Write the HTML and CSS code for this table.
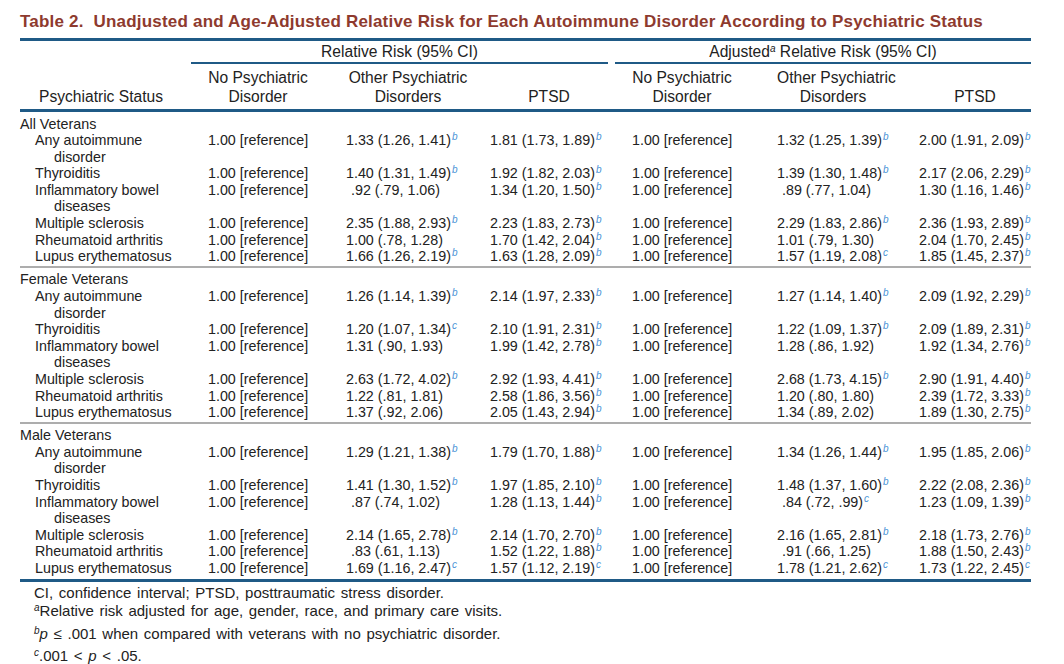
FILE: index.html
```html
<!DOCTYPE html>
<html>
<head>
<meta charset="utf-8">
<link rel="stylesheet" href="styles.css">
</head>
<body>
<div class="page">
  <h1 class="title">Table 2. &nbsp;Unadjusted and Age-Adjusted Relative Risk for Each Autoimmune Disorder According to Psychiatric Status</h1>
  <div class="table">
    <div class="spanrow">
      <div class="sp sp1">Relative Risk (95% CI)</div>
      <div class="sp sp2">Adjusted<span class="n">a</span> Relative Risk (95% CI)</div>
    </div>
    <div class="colrow">
      <div class="h h1">Psychiatric Status</div>
      <div class="h h2">No Psychiatric<br>Disorder</div>
      <div class="h h3">Other Psychiatric<br>Disorders</div>
      <div class="h h4">PTSD</div>
      <div class="h h5">No Psychiatric<br>Disorder</div>
      <div class="h h6">Other Psychiatric<br>Disorders</div>
      <div class="h h7">PTSD</div>
    </div>

    <div class="group">
      <div class="gl">All Veterans</div>
      <div class="r"><div class="lab">Any autoimmune<br>disorder</div><div class="d">1.00 [reference]</div><div class="d">1.33 (1.26, 1.41)<span class="s">b</span></div><div class="d">1.81 (1.73, 1.89)<span class="s">b</span></div><div class="d">1.00 [reference]</div><div class="d">1.32 (1.25, 1.39)<span class="s">b</span></div><div class="d">2.00 (1.91, 2.09)<span class="s">b</span></div></div>
      <div class="r"><div class="lab">Thyroiditis</div><div class="d">1.00 [reference]</div><div class="d">1.40 (1.31, 1.49)<span class="s">b</span></div><div class="d">1.92 (1.82, 2.03)<span class="s">b</span></div><div class="d">1.00 [reference]</div><div class="d">1.39 (1.30, 1.48)<span class="s">b</span></div><div class="d">2.17 (2.06, 2.29)<span class="s">b</span></div></div>
      <div class="r"><div class="lab">Inflammatory bowel<br>diseases</div><div class="d">1.00 [reference]</div><div class="d o">.92 (.79, 1.06)</div><div class="d">1.34 (1.20, 1.50)<span class="s">b</span></div><div class="d">1.00 [reference]</div><div class="d o">.89 (.77, 1.04)</div><div class="d">1.30 (1.16, 1.46)<span class="s">b</span></div></div>
      <div class="r"><div class="lab">Multiple sclerosis</div><div class="d">1.00 [reference]</div><div class="d">2.35 (1.88, 2.93)<span class="s">b</span></div><div class="d">2.23 (1.83, 2.73)<span class="s">b</span></div><div class="d">1.00 [reference]</div><div class="d">2.29 (1.83, 2.86)<span class="s">b</span></div><div class="d">2.36 (1.93, 2.89)<span class="s">b</span></div></div>
      <div class="r"><div class="lab">Rheumatoid arthritis</div><div class="d">1.00 [reference]</div><div class="d">1.00 (.78, 1.28)</div><div class="d">1.70 (1.42, 2.04)<span class="s">b</span></div><div class="d">1.00 [reference]</div><div class="d">1.01 (.79, 1.30)</div><div class="d">2.04 (1.70, 2.45)<span class="s">b</span></div></div>
      <div class="r"><div class="lab">Lupus erythematosus</div><div class="d">1.00 [reference]</div><div class="d">1.66 (1.26, 2.19)<span class="s">b</span></div><div class="d">1.63 (1.28, 2.09)<span class="s">b</span></div><div class="d">1.00 [reference]</div><div class="d">1.57 (1.19, 2.08)<span class="s">c</span></div><div class="d">1.85 (1.45, 2.37)<span class="s">b</span></div></div>
    </div>

    <div class="group">
      <div class="gl">Female Veterans</div>
      <div class="r"><div class="lab">Any autoimmune<br>disorder</div><div class="d">1.00 [reference]</div><div class="d">1.26 (1.14, 1.39)<span class="s">b</span></div><div class="d">2.14 (1.97, 2.33)<span class="s">b</span></div><div class="d">1.00 [reference]</div><div class="d">1.27 (1.14, 1.40)<span class="s">b</span></div><div class="d">2.09 (1.92, 2.29)<span class="s">b</span></div></div>
      <div class="r"><div class="lab">Thyroiditis</div><div class="d">1.00 [reference]</div><div class="d">1.20 (1.07, 1.34)<span class="s">c</span></div><div class="d">2.10 (1.91, 2.31)<span class="s">b</span></div><div class="d">1.00 [reference]</div><div class="d">1.22 (1.09, 1.37)<span class="s">b</span></div><div class="d">2.09 (1.89, 2.31)<span class="s">b</span></div></div>
      <div class="r"><div class="lab">Inflammatory bowel<br>diseases</div><div class="d">1.00 [reference]</div><div class="d">1.31 (.90, 1.93)</div><div class="d">1.99 (1.42, 2.78)<span class="s">b</span></div><div class="d">1.00 [reference]</div><div class="d">1.28 (.86, 1.92)</div><div class="d">1.92 (1.34, 2.76)<span class="s">b</span></div></div>
      <div class="r"><div class="lab">Multiple sclerosis</div><div class="d">1.00 [reference]</div><div class="d">2.63 (1.72, 4.02)<span class="s">b</span></div><div class="d">2.92 (1.93, 4.41)<span class="s">b</span></div><div class="d">1.00 [reference]</div><div class="d">2.68 (1.73, 4.15)<span class="s">b</span></div><div class="d">2.90 (1.91, 4.40)<span class="s">b</span></div></div>
      <div class="r"><div class="lab">Rheumatoid arthritis</div><div class="d">1.00 [reference]</div><div class="d">1.22 (.81, 1.81)</div><div class="d">2.58 (1.86, 3.56)<span class="s">b</span></div><div class="d">1.00 [reference]</div><div class="d">1.20 (.80, 1.80)</div><div class="d">2.39 (1.72, 3.33)<span class="s">b</span></div></div>
      <div class="r"><div class="lab">Lupus erythematosus</div><div class="d">1.00 [reference]</div><div class="d">1.37 (.92, 2.06)</div><div class="d">2.05 (1.43, 2.94)<span class="s">b</span></div><div class="d">1.00 [reference]</div><div class="d">1.34 (.89, 2.02)</div><div class="d">1.89 (1.30, 2.75)<span class="s">b</span></div></div>
    </div>

    <div class="group">
      <div class="gl">Male Veterans</div>
      <div class="r"><div class="lab">Any autoimmune<br>disorder</div><div class="d">1.00 [reference]</div><div class="d">1.29 (1.21, 1.38)<span class="s">b</span></div><div class="d">1.79 (1.70, 1.88)<span class="s">b</span></div><div class="d">1.00 [reference]</div><div class="d">1.34 (1.26, 1.44)<span class="s">b</span></div><div class="d">1.95 (1.85, 2.06)<span class="s">b</span></div></div>
      <div class="r"><div class="lab">Thyroiditis</div><div class="d">1.00 [reference]</div><div class="d">1.41 (1.30, 1.52)<span class="s">b</span></div><div class="d">1.97 (1.85, 2.10)<span class="s">b</span></div><div class="d">1.00 [reference]</div><div class="d">1.48 (1.37, 1.60)<span class="s">b</span></div><div class="d">2.22 (2.08, 2.36)<span class="s">b</span></div></div>
      <div class="r"><div class="lab">Inflammatory bowel<br>diseases</div><div class="d">1.00 [reference]</div><div class="d o">.87 (.74, 1.02)</div><div class="d">1.28 (1.13, 1.44)<span class="s">b</span></div><div class="d">1.00 [reference]</div><div class="d o">.84 (.72, .99)<span class="s">c</span></div><div class="d">1.23 (1.09, 1.39)<span class="s">b</span></div></div>
      <div class="r"><div class="lab">Multiple sclerosis</div><div class="d">1.00 [reference]</div><div class="d">2.14 (1.65, 2.78)<span class="s">b</span></div><div class="d">2.14 (1.70, 2.70)<span class="s">b</span></div><div class="d">1.00 [reference]</div><div class="d">2.16 (1.65, 2.81)<span class="s">b</span></div><div class="d">2.18 (1.73, 2.76)<span class="s">b</span></div></div>
      <div class="r"><div class="lab">Rheumatoid arthritis</div><div class="d">1.00 [reference]</div><div class="d o">.83 (.61, 1.13)</div><div class="d">1.52 (1.22, 1.88)<span class="s">b</span></div><div class="d">1.00 [reference]</div><div class="d o">.91 (.66, 1.25)</div><div class="d">1.88 (1.50, 2.43)<span class="s">b</span></div></div>
      <div class="r"><div class="lab">Lupus erythematosus</div><div class="d">1.00 [reference]</div><div class="d">1.69 (1.16, 2.47)<span class="s">c</span></div><div class="d">1.57 (1.12, 2.19)<span class="s">c</span></div><div class="d">1.00 [reference]</div><div class="d">1.78 (1.21, 2.62)<span class="s">c</span></div><div class="d">1.73 (1.22, 2.45)<span class="s">c</span></div></div>
    </div>
  </div>

  <div class="notes">
    <p class="note n1">CI, confidence interval; PTSD, posttraumatic stress disorder.</p>
    <p class="note n2"><span class="n">a</span>Relative risk adjusted for age, gender, race, and primary care visits.</p>
    <p class="note n3"><span class="n">b</span><i>p</i> ≤ .001 when compared with veterans with no psychiatric disorder.</p>
    <p class="note n4"><span class="n">c</span>.001 &lt; <i>p</i> &lt; .05.</p>
  </div>
</div>
</body>
</html>
```

FILE: styles.css
```css
html, body {
  margin: 0;
  padding: 0;
  background: #ffffff;
}

body {
  color: #222222;
  font-family: "Liberation Sans", Arial, sans-serif;
  font-size: 14.3px;
}

.page {
  padding: 12px 0 0 20px;
  width: 1011px;
}

.title {
  margin: 0;
  font-size: 17px;
  line-height: 20px;
  font-weight: bold;
  letter-spacing: 0.2px;
  color: #8e3a2e;
  white-space: nowrap;
}

.table {
  margin-top: 6px;
  border-top: 3px solid #1f5a86;
}

.spanrow,
.colrow,
.r {
  display: grid;
  grid-template-columns: 168px 138px 144px 142px 145px 142px 132px;
}

.spanrow {
  line-height: 21px;
  font-size: 15.6px;
}

.sp {
  text-align: center;
  border-bottom: 2px solid #1f5a86;
  white-space: nowrap;
}

.sp1 {
  grid-column: 2 / 5;
  margin-left: 3px;
  margin-right: 4px;
}

.sp2 {
  grid-column: 5 / 8;
  margin-left: 3px;
}

.colrow {
  padding: 4px 0 3px;
  line-height: 19px;
  font-size: 15.6px;
  border-bottom: 3px solid #1f5a86;
}

.h {
  align-self: end;
  text-align: center;
  white-space: nowrap;
}

.h1 { padding-right: 6px; }
.h2 { padding-left: 20px; padding-right: 18px; }
.h3 { padding-left: 20px; padding-right: 0; }
.h4 { padding-left: 20px; padding-right: 4px; }
.h5 { padding-left: 20px; padding-right: 25px; }
.h6 { padding-left: 20px; padding-right: 10px; }
.h7 { padding-left: 20px; padding-right: 0; }

.group {
  padding: 3.5px 0 1px;
  border-bottom: 2px solid #adadad;
  line-height: 16.6px;
}

.group:first-of-type {
  padding-top: 0;
}

.group:last-of-type {
  padding-bottom: 2.5px;
  border-bottom: 3px solid #1f5a86;
}

.gl {
  white-space: nowrap;
}

.lab {
  padding-left: 34px;
  text-indent: -19px;
  white-space: nowrap;
}

.d {
  padding-left: 20px;
  white-space: nowrap;
}

.d.o {
  padding-left: 25px;
}

.s {
  font-size: 10px;
  font-style: italic;
  color: #4a93d6;
  vertical-align: 5px;
  line-height: 0;
  margin-left: 1px;
}

.n {
  font-size: 10px;
  font-style: italic;
  vertical-align: 5px;
  line-height: 0;
}

.notes {
  padding-left: 14px;
  font-size: 15px;
  word-spacing: 1.5px;
}

.note {
  margin: 0;
  line-height: 18px;
  white-space: nowrap;
}

.n1 { margin-top: 2px; }
.n2 { margin-top: 0; }
.n3 { margin-top: 5px; }
.n4 { margin-top: 4px; }
```
